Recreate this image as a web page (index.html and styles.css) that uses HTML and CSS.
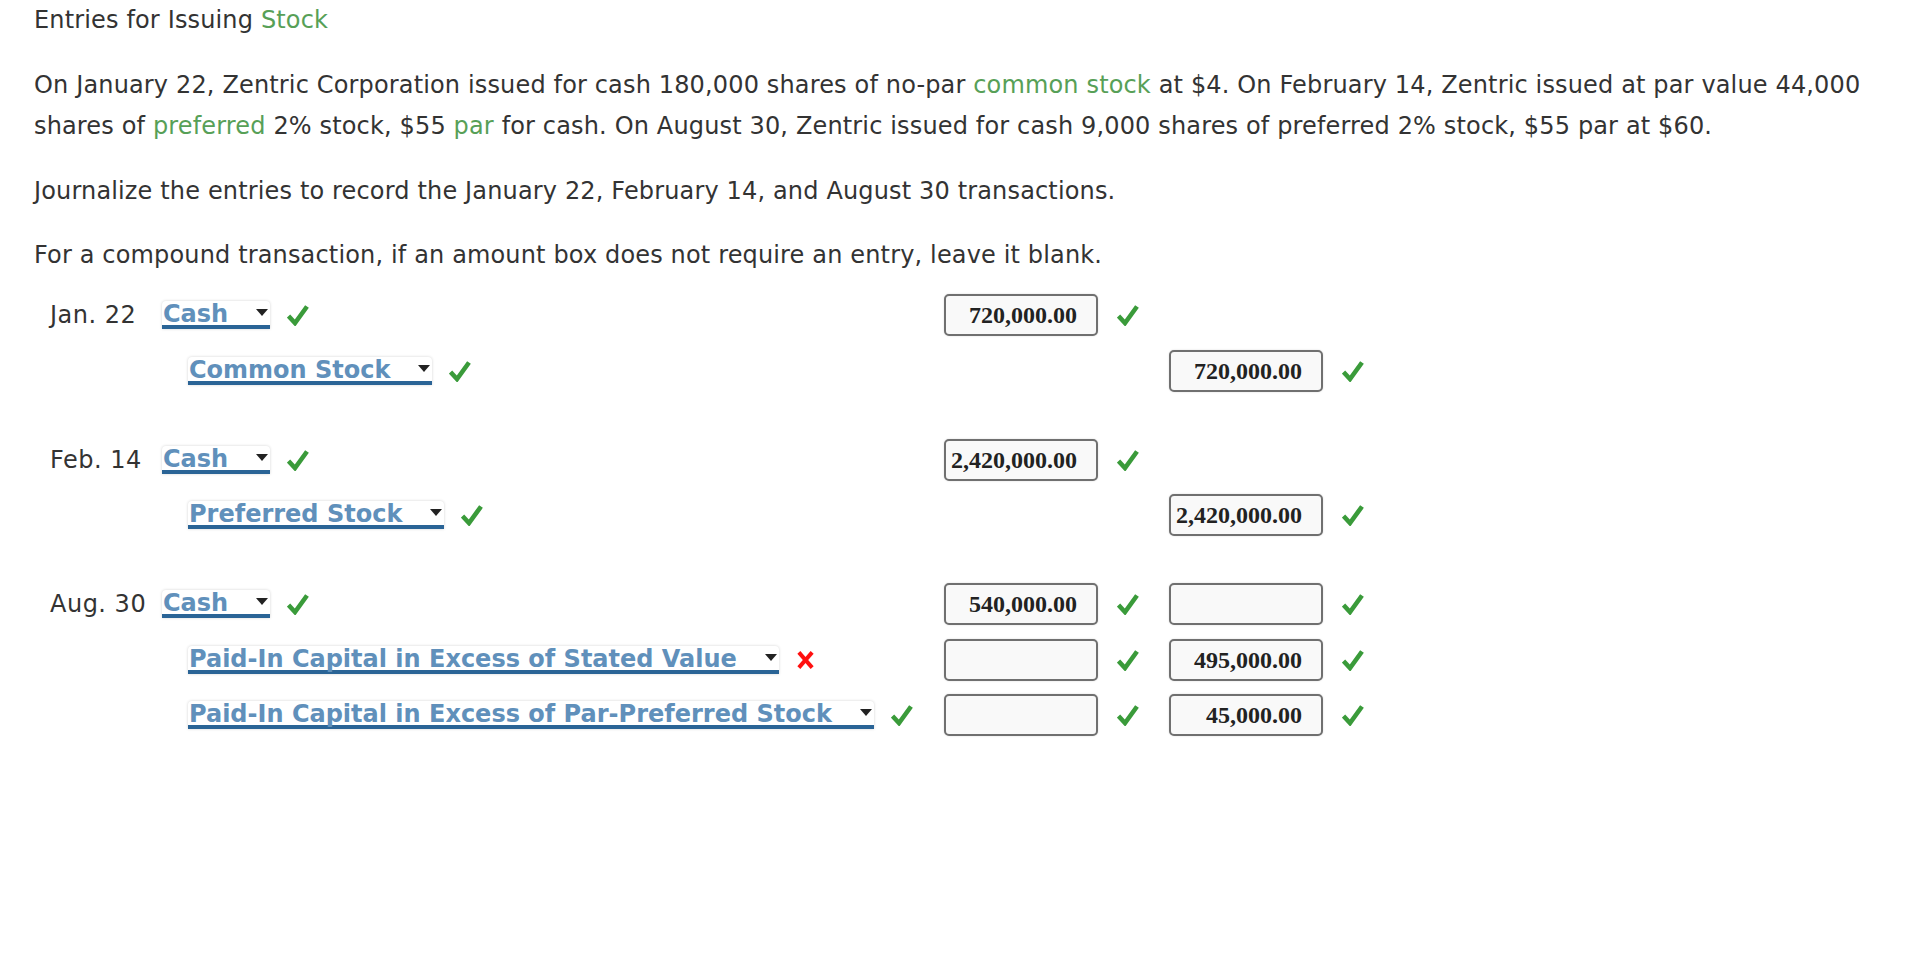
FILE: index.html
```html
<!DOCTYPE html>
<html>
<head>
<meta charset="utf-8">
<link rel="stylesheet" href="styles.css">
</head>
<body>
<div class="page">
  <div class="intro">
    <p>Entries for Issuing <span class="g">Stock</span></p>
    <p>On January 22, Zentric Corporation issued for cash 180,000 shares of no-par <span class="g">common stock</span> at $4. On February 14, Zentric issued at par value 44,000 shares of <span class="g">preferred</span> 2% stock, $55 <span class="g">par</span> for cash. On August 30, Zentric issued for cash 9,000 shares of preferred 2% stock, $55 par at $60.</p>
    <p>Journalize the entries to record the January 22, February 14, and August 30 transactions.</p>
    <p>For a compound transaction, if an amount box does not require an entry, leave it blank.</p>
  </div>

  <div class="journal">
    <div class="entry">
      <div class="row">
        <div class="date">Jan. 22</div>
        <div class="acct"><span class="sel">Cash<i class="arr"></i></span><svg class="ok" viewBox="0 0 22 22"><polyline points="1.5,12 8,19 20,2.5"/></svg></div>
        <div class="amt"><span class="box">720,000.00</span></div>
        <div class="mk"><svg class="ok" viewBox="0 0 22 22"><polyline points="1.5,12 8,19 20,2.5"/></svg></div>
        <div class="amt"></div>
        <div class="mk"></div>
      </div>
      <div class="row">
        <div class="date"></div>
        <div class="acct cr"><span class="sel">Common Stock<i class="arr"></i></span><svg class="ok" viewBox="0 0 22 22"><polyline points="1.5,12 8,19 20,2.5"/></svg></div>
        <div class="amt"></div>
        <div class="mk"></div>
        <div class="amt"><span class="box">720,000.00</span></div>
        <div class="mk"><svg class="ok" viewBox="0 0 22 22"><polyline points="1.5,12 8,19 20,2.5"/></svg></div>
      </div>
    </div>

    <div class="entry">
      <div class="row">
        <div class="date">Feb. 14</div>
        <div class="acct"><span class="sel">Cash<i class="arr"></i></span><svg class="ok" viewBox="0 0 22 22"><polyline points="1.5,12 8,19 20,2.5"/></svg></div>
        <div class="amt"><span class="box">2,420,000.00</span></div>
        <div class="mk"><svg class="ok" viewBox="0 0 22 22"><polyline points="1.5,12 8,19 20,2.5"/></svg></div>
        <div class="amt"></div>
        <div class="mk"></div>
      </div>
      <div class="row">
        <div class="date"></div>
        <div class="acct cr"><span class="sel">Preferred Stock<i class="arr"></i></span><svg class="ok" viewBox="0 0 22 22"><polyline points="1.5,12 8,19 20,2.5"/></svg></div>
        <div class="amt"></div>
        <div class="mk"></div>
        <div class="amt"><span class="box">2,420,000.00</span></div>
        <div class="mk"><svg class="ok" viewBox="0 0 22 22"><polyline points="1.5,12 8,19 20,2.5"/></svg></div>
      </div>
    </div>

    <div class="entry">
      <div class="row">
        <div class="date">Aug. 30</div>
        <div class="acct"><span class="sel">Cash<i class="arr"></i></span><svg class="ok" viewBox="0 0 22 22"><polyline points="1.5,12 8,19 20,2.5"/></svg></div>
        <div class="amt"><span class="box">540,000.00</span></div>
        <div class="mk"><svg class="ok" viewBox="0 0 22 22"><polyline points="1.5,12 8,19 20,2.5"/></svg></div>
        <div class="amt"><span class="box"></span></div>
        <div class="mk"><svg class="ok" viewBox="0 0 22 22"><polyline points="1.5,12 8,19 20,2.5"/></svg></div>
      </div>
      <div class="row">
        <div class="date"></div>
        <div class="acct cr"><span class="sel">Paid-In Capital in Excess of Stated Value<i class="arr"></i></span><svg class="bad" viewBox="0 0 20 20"><line x1="3" y1="2" x2="17" y2="18"/><line x1="17" y1="2" x2="3" y2="18"/></svg></div>
        <div class="amt"><span class="box"></span></div>
        <div class="mk"><svg class="ok" viewBox="0 0 22 22"><polyline points="1.5,12 8,19 20,2.5"/></svg></div>
        <div class="amt"><span class="box">495,000.00</span></div>
        <div class="mk"><svg class="ok" viewBox="0 0 22 22"><polyline points="1.5,12 8,19 20,2.5"/></svg></div>
      </div>
      <div class="row">
        <div class="date"></div>
        <div class="acct cr"><span class="sel">Paid-In Capital in Excess of Par-Preferred Stock<i class="arr"></i></span><svg class="ok" viewBox="0 0 22 22"><polyline points="1.5,12 8,19 20,2.5"/></svg></div>
        <div class="amt"><span class="box"></span></div>
        <div class="mk"><svg class="ok" viewBox="0 0 22 22"><polyline points="1.5,12 8,19 20,2.5"/></svg></div>
        <div class="amt"><span class="box">45,000.00</span></div>
        <div class="mk"><svg class="ok" viewBox="0 0 22 22"><polyline points="1.5,12 8,19 20,2.5"/></svg></div>
      </div>
    </div>
  </div>
</div>
</body>
</html>
```

FILE: styles.css
```css
html, body {
  margin: 0;
  padding: 0;
  background: #ffffff;
}

.page {
  padding: 0 0 0 34px;
  font-family: "DejaVu Sans", Verdana, sans-serif;
  font-size: 24px;
  color: #333333;
}

.intro {
  display: flex;
  flex-direction: column;
  gap: 23px;
  letter-spacing: 0.15px;
}

.intro p {
  margin: 0;
  line-height: 41.5px;
}

.g {
  color: #57a057;
}

.journal {
  margin-top: 11px;
  padding-left: 16px;
  display: flex;
  flex-direction: column;
  gap: 33.5px;
}

.row {
  display: grid;
  grid-template-columns: 112px 782px 154px 71px 154px 60px;
  height: 55.5px;
  align-items: center;
}

.date {
  white-space: nowrap;
  letter-spacing: 0.5px;
}

.acct {
  display: flex;
  align-items: center;
  gap: 17px;
}

.acct.cr {
  padding-left: 26px;
}

.sel {
  position: relative;
  display: inline-block;
  height: 24px;
  line-height: 26px;
  padding: 0 42px 0 1px;
  font-weight: bold;
  font-size: 24px;
  color: #6090bb;
  background: #ffffff;
  border-bottom: 4px solid #2a6496;
  border-radius: 4px 4px 0 0;
  box-shadow: 0 0 3px rgba(0, 0, 0, 0.18);
  white-space: nowrap;
}

.arr {
  position: absolute;
  right: 2px;
  top: 8px;
  width: 0;
  height: 0;
  border-left: 6px solid transparent;
  border-right: 6px solid transparent;
  border-top: 7px solid #222222;
}

.amt {
  display: flex;
  align-items: center;
}

.box {
  box-sizing: border-box;
  display: block;
  width: 154px;
  height: 42px;
  padding: 0 19px 0 4px;
  border: 2px solid #707070;
  border-radius: 5px;
  background: #f9f9f9;
  box-shadow: 0 0 2px rgba(0, 0, 0, 0.15);
  font-family: "Liberation Serif", "Times New Roman", serif;
  font-weight: bold;
  font-size: 24px;
  line-height: 38px;
  color: #222222;
  text-align: right;
}

.mk {
  display: flex;
  align-items: center;
  padding-left: 19px;
}

.ok {
  width: 22px;
  height: 22px;
  flex: none;
}

.ok polyline {
  fill: none;
  stroke: #3a9b3a;
  stroke-width: 4.6;
}

.bad {
  width: 19px;
  height: 20px;
  flex: none;
}

.bad line {
  stroke: #ff1010;
  stroke-width: 4.2;
}
```
